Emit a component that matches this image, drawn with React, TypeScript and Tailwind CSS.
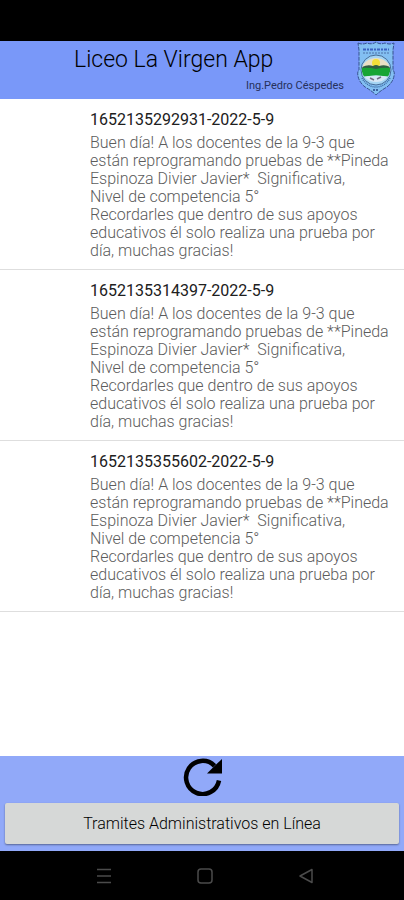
import React, { useState } from 'react';

interface Notice {
  id: string;
  date: string;
  message: string;
}

const MESSAGE =
  'Buen día! A los docentes de la 9-3 que están reprogramando pruebas de **Pineda Espinoza Divier Javier*  Significativa,\nNivel de competencia 5°\nRecordarles que dentro de sus apoyos educativos él solo realiza una prueba por día, muchas gracias!';

const NOTICES: Notice[] = [
  { id: '1652135292931', date: '2022-5-9', message: MESSAGE },
  { id: '1652135314397', date: '2022-5-9', message: MESSAGE },
  { id: '1652135355602', date: '2022-5-9', message: MESSAGE },
];

function SchoolCrest() {
  return (
    <svg viewBox="0 0 40 56" className="w-10 h-14 shrink-0" role="img" aria-label="Escudo del liceo">
      <path
        d="M2 2 Q6 4 11 2 Q16 4 20 1 Q24 4 29 2 Q34 4 38 2 L37 9 L37 29 Q39 31 38 35 Q37 41 31 46 Q24 50 20 54 Q16 50 9 46 Q3 41 2 35 Q1 31 3 29 L3 9 Z"
        fill="#83bff2"
        stroke="#35508e"
        strokeWidth="1"
        strokeDasharray="4 1"
      />
      <path d="M7 8.5 H33" stroke="#3c62c4" strokeWidth="2" strokeDasharray="3 1 2 1" />
      <path d="M7 12 H33" stroke="#4c72a8" strokeWidth="1" strokeDasharray="2 1" />
      <circle cx="20" cy="29" r="15" fill="#a5d5f4" stroke="#466d9a" strokeWidth="1" />
      <clipPath id="crest-scene">
        <ellipse cx="20" cy="29" rx="14" ry="12" />
      </clipPath>
      <g clipPath="url(#crest-scene)">
        <rect x="6" y="15" width="28" height="13" fill="#eadfc4" />
        <circle cx="20" cy="22" r="4" fill="#f3df38" />
        <path d="M6 26 Q12 23 17 25 Q20 23 23 25 Q29 23 34 26 V31 H6 Z" fill="#315e42" />
        <path d="M6 27 Q13 26 20 28 Q27 26 34 27 V36 Q20 33 6 36 Z" fill="#18a534" />
        <path d="M6 36 Q20 33 34 36 V43 H6 Z" fill="#d7e7f5" />
        <path d="M14 37 l4 2 M21 38 l4 -2" stroke="#756d82" strokeWidth="1.5" />
      </g>
      <path d="M6 37 Q11 46 20 46 Q29 46 34 37" fill="none" stroke="#3b679f" strokeWidth="1.5" strokeDasharray="1 1" />
      <path d="M17 49 H23" stroke="#3c62a0" strokeWidth="2" strokeDasharray="2 1" />
    </svg>
  );
}

function RefreshIcon() {
  return (
    <svg viewBox="0 0 40 40" className="w-10 h-10" aria-hidden="true">
      <path d="M32.5 9.8 A16.6 16.6 0 1 0 37 24.5" fill="none" stroke="#000" strokeWidth="4.5" />
      <path d="M40 3 V17.5 H25 L29.5 13 L33 9.5 Z" fill="#000" />
    </svg>
  );
}

export default function App() {
  const [notices, setNotices] = useState<Notice[]>(NOTICES);

  return (
    <div className="min-h-screen flex flex-col bg-white font-[Roboto,sans-serif]">
      {/* Status bar */}
      <div className="h-[41px] bg-black" />

      <header className="flex items-start justify-between bg-[#7998f9] pr-2 h-[58px]">
        <div className="flex-1 flex flex-col">
          <h1 className="pl-[74px] pt-1 text-[23px] leading-[30px] font-light text-black">Liceo La Virgen App</h1>
          <p className="pr-3 text-right text-[11px] leading-[22px] text-[#26315c]">Ing.Pedro Céspedes</p>
        </div>
        <SchoolCrest />
      </header>

      <main className="flex-1">
        <ul>
          {notices.map((notice) => (
            <li key={notice.id} className="border-b border-[#dedede] pl-[90px] pr-3 pt-3 pb-2">
              <h2 className="text-base leading-[18px] text-[#202020]">
                {notice.id}-{notice.date}
              </h2>
              <p className="pt-[5px] pb-px text-base leading-[18px] font-light whitespace-pre-wrap text-[#5c5c5c]">{notice.message}</p>
            </li>
          ))}
        </ul>
      </main>

      <footer className="flex flex-col items-center bg-[#91a9f9] px-[5px] pb-[7px]">
        <button
          type="button"
          onClick={() => setNotices([...NOTICES])}
          className="mb-[7px] cursor-pointer"
          aria-label="Actualizar"
        >
          <RefreshIcon />
        </button>
        <button
          type="button"
          className="w-full h-[41px] rounded-xs bg-[#d6d8d7] text-base font-light text-black shadow-[0_1px_2px_rgba(0,0,0,0.4)] cursor-pointer"
        >
          Tramites Administrativos en Línea
        </button>
      </footer>

      {/* Android navigation bar */}
      <nav className="flex items-center justify-center gap-[85px] h-[49px] pl-[6px] bg-black text-[#4b4b4b]">
        <button type="button" aria-label="Recientes">
          <svg viewBox="0 0 16 16" className="size-4" fill="none" stroke="currentColor" strokeWidth="1.5">
            <path d="M1 1.5 H15 M1 8 H15 M1 14.5 H15" />
          </svg>
        </button>
        <button type="button" aria-label="Inicio">
          <svg viewBox="0 0 16 16" className="size-4" fill="none" stroke="currentColor" strokeWidth="1.5">
            <rect x="1" y="1" width="14" height="14" rx="3" />
          </svg>
        </button>
        <button type="button" aria-label="Atrás">
          <svg viewBox="0 0 16 16" className="size-4" fill="none" stroke="currentColor" strokeWidth="1.5" strokeLinejoin="round">
            <path d="M14 1.5 V14.5 L2 8 Z" />
          </svg>
        </button>
      </nav>
    </div>
  );
}
